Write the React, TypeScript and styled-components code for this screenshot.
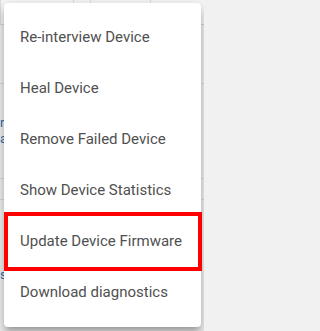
import React from "react";
import styled, { createGlobalStyle } from "styled-components";

const Global = createGlobalStyle`
  html, body { margin: 0; padding: 0; }
  body {
    width: 204px;
    height: 331px;
    overflow: hidden;
    background: #f1f1f1;
    font-family: Roboto, "Noto Sans", Arial, sans-serif;
  }
`;

const Page = styled.div`
  position: relative;
  width: 204px;
  height: 331px;
  overflow: hidden;
`;

const Backdrop = styled.div`
  display: flex;
  flex-direction: column;
  width: 204px;
  height: 331px;
  background: #f1f1f1;
`;

const HeaderRow = styled.div`
  flex-shrink: 0;
  display: grid;
  grid-template-columns: 73px 17px 60px 1fr;
  height: 38px;
  margin-top: -14px;
  border-bottom: 1px solid #d6d6d6;
  background: #f6f6f6;
`;

const HeaderCell = styled.div<{ $color?: string }>`
  padding: 0 0 0 8px;
  font-size: 14px;
  line-height: 16px;
  color: ${(p) => p.$color || "#333"};
  border-left: 1px solid #dddddd;
  white-space: nowrap;
  overflow: hidden;
`;

const BodyRow = styled.div<{ $h: number }>`
  flex-shrink: 0;
  height: ${(p) => p.$h}px;
  border-bottom: 1px solid #dadada;
  display: flex;
  flex-direction: column;
  justify-content: center;
  gap: 2px;
  font-size: 13px;
  line-height: 14px;
  color: #2b6cb0;
  overflow: hidden;
  white-space: nowrap;
`;

const Menu = styled.ul`
  position: absolute;
  left: 4px;
  top: 3px;
  width: 197px;
  height: 324px;
  box-sizing: border-box;
  margin: 0;
  padding: 8px 0 10px;
  list-style: none;
  background: #ffffff;
  border-radius: 4px;
  box-shadow: 0px 5px 5px -3px rgba(0, 0, 0, 0.2),
    0px 8px 10px 1px rgba(0, 0, 0, 0.14), 0px 3px 14px 2px rgba(0, 0, 0, 0.12);
  display: flex;
  flex-direction: column;
`;

const Item = styled.li`
  position: relative;
  flex: 0 0 51px;
  height: 51px;
  display: flex;
  align-items: center;
  padding-left: 16px;
  font-family: Roboto, "Noto Sans", Arial, sans-serif;
  font-size: 15px;
  color: #505050;
  white-space: nowrap;
`;

const Highlight = styled.div`
  position: absolute;
  left: 0;
  right: -1px;
  top: -3px;
  bottom: -5px;
  border: 4.5px solid #ff0000;
  pointer-events: none;
`;

const items = [
  "Re-interview Device",
  "Heal Device",
  "Remove Failed Device",
  "Show Device Statistics",
  "Update Device Firmware",
  "Download diagnostics",
];

export default function App() {
  return (
    <>
      <Global />
      <Page>
        <Backdrop>
          <HeaderRow>
            <HeaderCell />
            <HeaderCell />
            <HeaderCell $color="#3b78c2">ID</HeaderCell>
            <HeaderCell>Node 2</HeaderCell>
          </HeaderRow>
          <BodyRow $h={58} />
          <BodyRow $h={94}>
            <span>r</span>
            <span>a</span>
          </BodyRow>
          <BodyRow $h={20} />
          <BodyRow $h={150}>
            <span>s</span>
          </BodyRow>
        </Backdrop>
        <Menu>
          {items.map((t, i) => (
            <Item key={t}>
              {t}
              {i === 4 && <Highlight />}
            </Item>
          ))}
        </Menu>
      </Page>
    </>
  );
}
